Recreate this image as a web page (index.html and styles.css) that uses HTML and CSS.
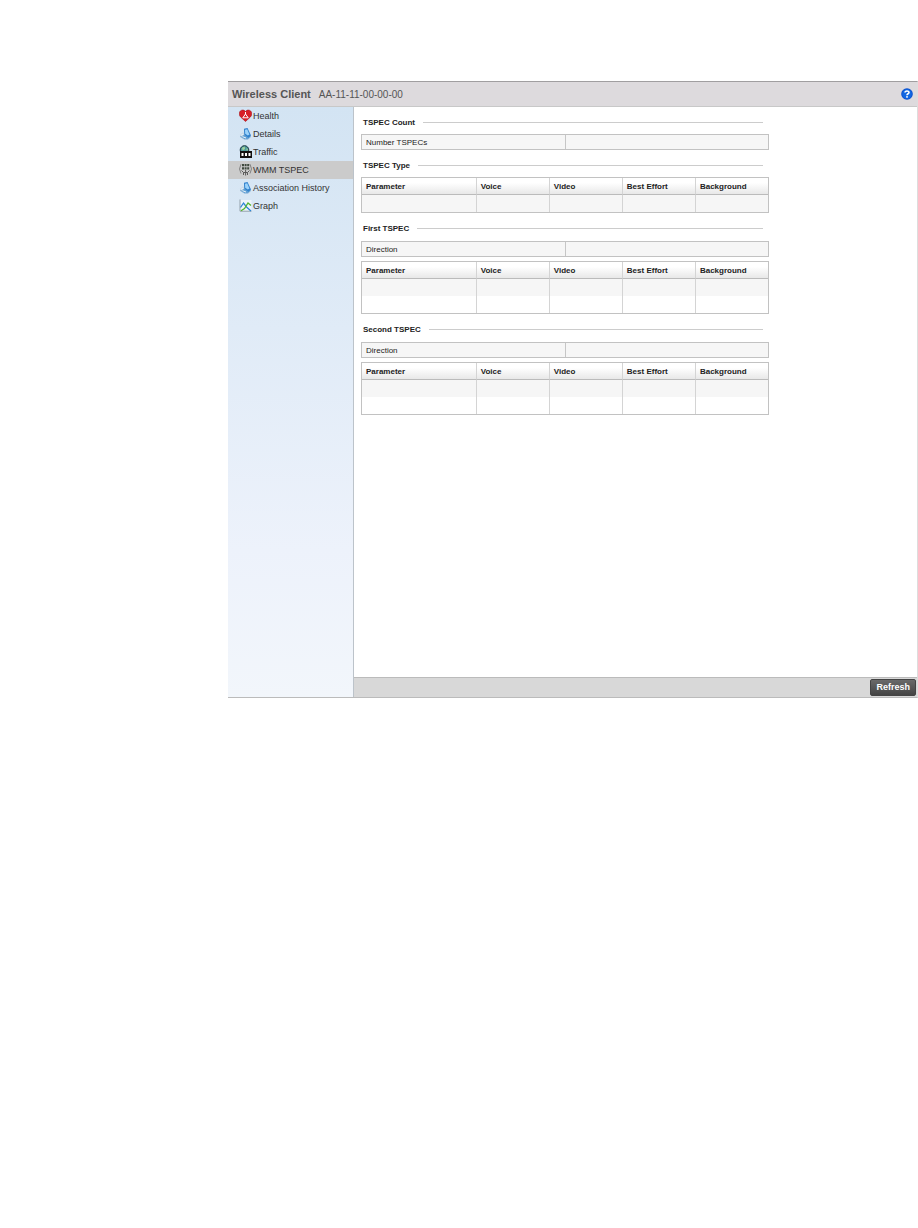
FILE: index.html
```html
<!DOCTYPE html>
<html lang="en">
<head>
  <meta charset="UTF-8">
  <title>Wireless Client</title>
  <link rel="stylesheet" href="styles.css">
</head>
<body>
  <div class="panel">
    <header class="panel-header">
      <h1>Wireless Client</h1>
      <span class="mac">AA-11-11-00-00-00</span>
      <button class="help" type="button" aria-label="Help">
        <svg viewBox="0 0 12 12" width="12" height="12">
          <circle cx="6" cy="6" r="5.8" fill="#0b50cf"/>
          <circle cx="6" cy="6" r="4.8" fill="#1167e2"/>
          <path d="M4 4.6C4 2.4 8 2.4 8 4.5C8 5.8 6 5.7 6 7.2" fill="none" stroke="#fff" stroke-width="1.6"/>
          <rect x="5.2" y="8.1" width="1.6" height="1.6" fill="#fff"/>
        </svg>
      </button>
    </header>
    <div class="panel-body">
      <nav class="sidebar">
        <a href="#health">
          <svg viewBox="0 0 13 13" width="13" height="13">
            <path d="M6.5 12.5L1.6 8C-.7 5.5.1 1.4 3.4 1.1C5 1 6 1.7 6.5 2.6C7 1.7 8 1 9.6 1.1C12.9 1.4 13.7 5.5 11.4 8Z" fill="#d81f26" stroke="#a5151c" stroke-width=".6"/>
            <path d="M6.5 3V5L3.8 8.8H9.2L6.5 5" fill="none" stroke="#fff"/>
          </svg>
          Health
        </a>
        <a href="#details">
          <svg viewBox="0 0 13 13" width="13" height="13">
            <path d="M1 9.5L5 7L12 9.5L9 12.2L5.5 12.2Z" fill="#5f9fd4" stroke="#8db4d6" stroke-width=".6"/>
            <path d="M5 1.8L8.5 1L12 8.5L9.5 10.8L5.2 7.6Z" fill="#2f80cc"/>
            <path d="M6 2.8L8.2 2.2L10.5 7.6L8.8 8.6L6.2 6.8Z" fill="#9bd2fa"/>
            <path d="M1.4 7.8L4.2 5.8L5.2 7.4L2.4 9.4Z" fill="#e3eff8" stroke="#a9bccb" stroke-width=".4"/>
            <path d="M3.4 9.6L7 11" stroke="#fff" stroke-width=".9"/>
          </svg>
          Details
        </a>
        <a href="#traffic">
          <svg viewBox="0 0 13 13" width="13" height="13">
            <circle cx="5.5" cy="5" r="4.3" fill="#4e9a9c" stroke="#18343b"/>
            <path d="M3 2.8L5.6 1.6L6 4L3.6 5.6ZM7 3.2L9 4.5L8 6Z" fill="#a3d39c"/>
            <rect x="1" y="6" width="12" height="7" fill="#111"/>
            <path d="M2.5 8H4.5V11H2.5ZM6 8H8V11H6ZM9.5 8H11.5V11H9.5Z" fill="#fff"/>
          </svg>
          Traffic
        </a>
        <a href="#wmm" class="active">
          <svg viewBox="0 0 13 13" width="13" height="13">
            <path d="M2 1.2Q-1 6 2 10.5M11 1.2Q14 6 11 10.5" fill="none" stroke="#777" stroke-width=".9"/>
            <path d="M3 1H5V3.2H3ZM5.6 1H7.6V3.2H5.6ZM8.2 1H10.2V3.2H8.2ZM3 4.2H5V6.4H3ZM5.6 4.2H7.6V6.4H5.6ZM8.2 4.2H10.2V6.4H8.2Z" fill="#3f4a3f"/>
            <path d="M2.5 7.5L4.5 9.5H8.5L10.5 7.5M4.5 9.5V12M6.6 7V12.5M8.5 9.5V12" fill="none" stroke="#5a5a5a"/>
          </svg>
          WMM TSPEC
        </a>
        <a href="#history">
          <svg viewBox="0 0 13 13" width="13" height="13">
            <path d="M1 9.5L5 7L12 9.5L9 12.2L5.5 12.2Z" fill="#5f9fd4" stroke="#8db4d6" stroke-width=".6"/>
            <path d="M5 1.8L8.5 1L12 8.5L9.5 10.8L5.2 7.6Z" fill="#2f80cc"/>
            <path d="M6 2.8L8.2 2.2L10.5 7.6L8.8 8.6L6.2 6.8Z" fill="#9bd2fa"/>
            <path d="M1.4 7.8L4.2 5.8L5.2 7.4L2.4 9.4Z" fill="#e3eff8" stroke="#a9bccb" stroke-width=".4"/>
            <path d="M3.4 9.6L7 11" stroke="#fff" stroke-width=".9"/>
          </svg>
          Association History
        </a>
        <a href="#graph">
          <svg viewBox="0 0 13 13" width="13" height="13">
            <rect x="1" y="1" width="11.5" height="11" fill="#eef5fa"/>
            <path d="M1 .5V12.2H12.5" fill="none" stroke="#8b98a3" stroke-width=".9"/>
            <path d="M1.5 8.5L4.5 4L7.5 8L12 12" fill="none" stroke="#2f86d6" stroke-width="1.3"/>
            <path d="M2 11.8L5.5 9.5L9 4L12 6.5" fill="none" stroke="#55b52e" stroke-width="1.3"/>
          </svg>
          Graph
        </a>
      </nav>
      <div class="main">
        <main class="content">
          <section class="group">
            <h2>TSPEC Count</h2>
            <dl class="field"><dt>Number TSPECs</dt><dd></dd></dl>
          </section>
          <section class="group">
            <h2>TSPEC Type</h2>
            <table class="grid">
              <thead>
                <tr><th>Parameter</th><th>Voice</th><th>Video</th><th>Best Effort</th><th>Background</th></tr>
              </thead>
              <tbody>
                <tr><td></td><td></td><td></td><td></td><td></td></tr>
              </tbody>
            </table>
          </section>
          <section class="group detail">
            <h2>First TSPEC</h2>
            <dl class="field"><dt>Direction</dt><dd></dd></dl>
            <table class="grid">
              <thead>
                <tr><th>Parameter</th><th>Voice</th><th>Video</th><th>Best Effort</th><th>Background</th></tr>
              </thead>
              <tbody>
                <tr><td></td><td></td><td></td><td></td><td></td></tr>
                <tr><td></td><td></td><td></td><td></td><td></td></tr>
              </tbody>
            </table>
          </section>
          <section class="group detail">
            <h2>Second TSPEC</h2>
            <dl class="field"><dt>Direction</dt><dd></dd></dl>
            <table class="grid">
              <thead>
                <tr><th>Parameter</th><th>Voice</th><th>Video</th><th>Best Effort</th><th>Background</th></tr>
              </thead>
              <tbody>
                <tr><td></td><td></td><td></td><td></td><td></td></tr>
                <tr><td></td><td></td><td></td><td></td><td></td></tr>
              </tbody>
            </table>
          </section>
        </main>
        <footer class="toolbar">
          <button class="refresh" type="button">Refresh</button>
        </footer>
      </div>
    </div>
  </div>
</body>
</html>
```
FILE: styles.css
```css
* { box-sizing: border-box; }
body { margin: 0; padding: 81px 0 0 228px; background: #fff; color: #222; font-family: "Liberation Sans", Arial, sans-serif; font-size: 8px; }
h1, h2, dl, dd { margin: 0; }

/* Panel */
.panel { border: 1px solid #bbb; border-width: 1px 1px 1px 0; border-top-color: #a09ea0; border-right-color: #ddd; }
.panel-header { display: flex; align-items: center; height: 25px; padding: 0 4px; background: #dddadd; border-bottom: 1px solid #c8c8c8; color: #555; }
.panel-header h1 { font-size: 11px; }
.mac { margin-left: 8px; font-size: 10px; }
.help { display: flex; margin-left: auto; padding: 0; border: none; background: none; cursor: pointer; }
.panel-body { display: flex; min-height: 590px; }

/* Sidebar */
.sidebar { width: 126px; flex: none; background: linear-gradient(#d3e4f3, #edf2fb 75%, #f2f6fb); border-right: 1px solid #bcc3ca; }
.sidebar a { display: flex; align-items: center; gap: 1px; height: 18px; padding: 0 0 1px 11px; color: #333; font-size: 9px; text-decoration: none; white-space: nowrap; }
.sidebar a.active { background: #cbcbcb; }

/* Content */
.main { flex: 1; display: flex; flex-direction: column; }
.content { flex: 1; padding: 8px 7px; }
.group { max-width: 408px; margin-bottom: 8px; }
.group h2 { display: flex; align-items: center; gap: 8px; height: 14px; margin: 0 6px 5px 2px; font-size: 8px; }
.group h2::after { content: ""; flex: 1; border-top: 1px solid #ccc; }
.detail h2 { margin-bottom: 6px; }
.field { display: flex; height: 16px; line-height: 15px; background: #f6f6f6; border: 1px solid #c2c2c2; }
.field dt { width: 50%; padding-left: 4px; }
.field dd { flex: 1; border-left: 1px solid #c6c6c6; }
.field + .grid { margin-top: 4px; }

/* Tables */
.grid { width: 100%; table-layout: fixed; border-collapse: separate; border-spacing: 0; border: 1px solid #c2c2c2; }
.grid th, .grid td { width: 18%; padding: 0 0 0 4px; border-left: 1px solid #d4d4d4; text-align: left; }
.grid th:first-child, .grid td:first-child { width: 28%; border-left: none; }
.grid th { height: 17px; background: linear-gradient(#fff 30%, #e8e8e8); border-bottom: 1px solid #bbb; }
.grid td { height: 17px; background: #f6f6f6; }
.grid tr:nth-child(even) td { background: #fff; }

/* Toolbar */
.toolbar { display: flex; justify-content: flex-end; align-items: center; height: 20px; padding-right: 1px; background: #d8d8d8; border-top: 1px solid #bbb; }
.refresh { height: 17px; padding: 0 5px; border: 1px solid #444; border-radius: 2px; background: linear-gradient(#6a6a6a, #444); color: #fff; font-family: inherit; font-size: 9px; font-weight: bold; line-height: 15px; cursor: pointer; }
```
